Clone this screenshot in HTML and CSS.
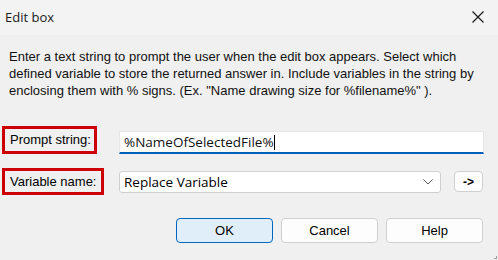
FILE: index.html
```html
<!DOCTYPE html>
<html lang="en">

<head>
    <meta charset="UTF-8">
    <meta name="viewport" content="width=device-width, initial-scale=1.0">
    <title>Edit box</title>
    <link rel="stylesheet" href="styles.css">
</head>

<body>
    <div class="dialog">
        <div class="titlebar">
            <span class="title">Edit box</span>
            <svg class="close" width="12" height="12" viewBox="0 0 12 12">
                <path d="M0.5 0.5 L11.5 11.5 M11.5 0.5 L0.5 11.5" stroke="#1a1a1a" stroke-width="1.2" fill="none" />
            </svg>
        </div>
        <div class="content">
            <p class="desc">Enter a text string to prompt the user when the edit box appears. Select which
                defined variable to store the returned answer in. Include variables in the string by
                enclosing them with % signs. (Ex. "Name drawing size for %filename%" ).</p>

            <div class="row row-prompt">
                <div class="label-col">
                    <span class="mark">Prompt string:</span>
                </div>
                <div class="field input">%NameOfSelectedFile%<span class="caret"></span></div>
            </div>

            <div class="row row-var">
                <div class="label-col">
                    <span class="mark">Variable name:</span>
                </div>
                <div class="field select">
                    <span>Replace Variable</span>
                    <svg class="chev" width="10" height="6" viewBox="0 0 10 6">
                        <path d="M0.5 0.5 L5 5 L9.5 0.5" stroke="#555" stroke-width="1" fill="none" />
                    </svg>
                </div>
                <button class="btn arrow">-&gt;</button>
            </div>

            <div class="actions">
                <button class="btn primary">OK</button>
                <button class="btn">Cancel</button>
                <button class="btn">Help</button>
            </div>
        </div>
        <div class="grip"></div>
    </div>
</body>

</html>
```

FILE: styles.css
```css
* {
    margin: 0;
    box-sizing: border-box;
    padding: 0;
}

body {
    width: 498px;
    height: 260px;
    overflow: hidden;
    background: #f0f0f0;
    font-family: "Liberation Sans", Arial, sans-serif;
    color: #000;
}

.dialog {
    position: relative;
    height: 260px;
}

.titlebar {
    display: flex;
    align-items: center;
    justify-content: space-between;
    height: 35px;
    padding: 0 14px 2px 5px;
    background: #f3f3f3;
}

.title {
    font-family: "Open Sans", "Noto Sans", sans-serif;
    font-size: 13px;
    color: #1a1a1a;
}

.content {
    padding-top: 13px;
}

.desc {
    padding: 0 20px 0 9px;
    font-size: 13px;
    line-height: 17px;
    color: #111;
}

.row {
    display: flex;
}

.label-col {
    width: 117px;
    margin-left: 2px;
    flex-shrink: 0;
}

.mark {
    display: inline-block;
    padding: 0 4px 0 5px;
    border: 3px solid #cc0000;
    font-size: 13px;
    white-space: nowrap;
}

.row-prompt {
    align-items: flex-end;
    margin-top: 27px;
    margin-right: 14px;
}

.row-prompt .mark {
    height: 28px;
    line-height: 22px;
    width: 95px;
}

.field {
    flex: 1;
    font-family: "Open Sans", "Noto Sans", sans-serif;
    font-size: 13.5px;
    background: #fff;
}

.input {
    display: flex;
    align-items: center;
    height: 23px;
    padding: 0 4px;
    border: 1px solid #e6e6e6;
    border-bottom: 2px solid #005fb8;
    color: #111;
}

.caret {
    display: inline-block;
    width: 1px;
    height: 15px;
    background: #000;
}

.row-var {
    align-items: center;
    margin-top: 14px;
    margin-right: 15px;
}

.row-var .mark {
    height: 27px;
    line-height: 21px;
    width: 102px;
}

.select {
    display: flex;
    align-items: center;
    justify-content: space-between;
    height: 22px;
    margin-right: 13px;
    padding: 0 7px 0 4px;
    border: 1px solid #d0d0d0;
    border-radius: 3px;
}

.btn {
    height: 25px;
    width: 97px;
    border: 1px solid #d0d0d0;
    border-radius: 4px;
    background: #fdfdfd;
    font-family: "Liberation Sans", Arial, sans-serif;
    font-size: 13px;
    color: #000;
}

.arrow {
    width: 29px;
    height: 21px;
    font-weight: bold;
    font-size: 12px;
}

.actions {
    display: flex;
    justify-content: flex-end;
    gap: 8px;
    margin-top: 23px;
    margin-right: 15px;
}

.primary {
    background: #e0eef9;
    border-color: #0067c0;
}

.grip {
    position: absolute;
    right: 1px;
    bottom: 1px;
    width: 3px;
    height: 3px;
    border-right: 1px solid #a0a0a0;
    border-bottom: 1px solid #a0a0a0;
}
```
